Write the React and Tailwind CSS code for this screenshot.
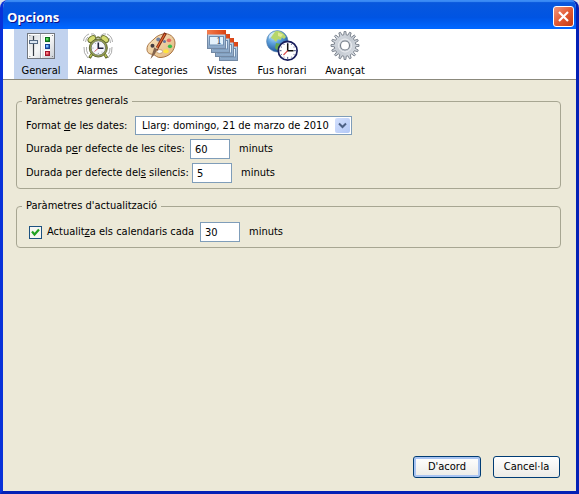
import React from "react";

function GeneralIcon() {
  return (
    <svg width="32" height="32" viewBox="0 0 32 32" aria-hidden="true">
      <defs>
        <linearGradient id="panel" x1="0" y1="0" x2="1" y2="1">
          <stop offset="0" stopColor="#d3d7da" />
          <stop offset="0.5" stopColor="#f7f8f8" />
          <stop offset="1" stopColor="#c9ced4" />
        </linearGradient>
      </defs>
      <rect x="2.5" y="3.5" width="27" height="25" fill="url(#panel)" stroke="#72777f" />
      <path d="M3.5 28V4.5H29" fill="none" stroke="#fff" />
      <path d="M15.5 4V28" stroke="#a5abb3" />
      <path d="M16.5 4V28" stroke="#fff" />
      <path d="M8.5 6V26" stroke="#353b43" strokeWidth="1.2" />
      <rect x="4.5" y="10.5" width="8" height="3" fill="#dce7f3" stroke="#566b85" />
      <rect x="19" y="6" width="6" height="6" fill="#fff" />
      <rect x="19" y="13" width="6" height="6" fill="#fff" />
      <rect x="19" y="20" width="6" height="6" fill="#fff" />
      <rect x="20" y="7" width="5" height="5" fill="#0c6b1b" />
      <rect x="21" y="8" width="2.5" height="2.5" fill="#5fe05f" />
      <rect x="20" y="14" width="5" height="5" fill="#123f96" />
      <rect x="21" y="15" width="2.5" height="2.5" fill="#7cc0ff" />
      <rect x="20" y="21" width="5" height="5" fill="#a3162a" />
      <rect x="21" y="22" width="2.5" height="2.5" fill="#ff7a80" />
      {[5.5, 26.5].map((y) => (
        <React.Fragment key={y}>
          <circle cx="4.8" cy={y} r="0.6" fill="#777" />
          <circle cx="27.5" cy={y} r="0.6" fill="#777" />
        </React.Fragment>
      ))}
    </svg>
  );
}

function AlarmIcon() {
  return (
    <svg width="32" height="32" viewBox="0 0 32 32" aria-hidden="true">
      <g fill="none" stroke="#a2a2a2" strokeWidth="0.9">
        <path d="M1.5 11Q2 6 7 4M3.5 12Q4 8 6 7M30.5 12Q30 6 25 4M28.5 13Q28 9 27 8" />
        <path d="M2 17Q1 23 6 28M4.5 17Q4 21 6 24M30 17Q31 23 26 28M28 18Q28 22 26.5 24" />
        <path d="M9 4Q12 3 14 6M24 4Q21 3 18.5 6" />
      </g>
      <path d="M10 24L7.5 28M22.5 24L25 28" stroke="#596128" strokeWidth="3" />
      <path d="M10 24L8 27M22.5 24L24.5 27" stroke="#bcc65a" strokeWidth="1.5" />
      <path d="M14 8.5Q16 5.5 18.5 8.5" fill="none" stroke="#697038" strokeWidth="1.3" />
      <ellipse cx="9.8" cy="9" rx="4.2" ry="2.8" transform="rotate(-38 9.8 9)" fill="#d6dc71" stroke="#6b7435" />
      <ellipse cx="22.8" cy="9" rx="4.2" ry="2.8" transform="rotate(38 22.8 9)" fill="#d6dc71" stroke="#6b7435" />
      <circle cx="16.3" cy="18" r="9" fill="#98a14a" stroke="#606735" />
      <circle cx="16.3" cy="18" r="7.2" fill="#f6f7fd" stroke="#777f68" />
      <path d="M16.3 12.5V18.2H21.5" fill="none" stroke="#20233d" strokeWidth="1.6" />
      <path d="M16 18.5L12.5 21.5" stroke="#d46068" />
      <g fill="#8b91a0">
        <circle cx="11" cy="18" r="0.6" />
        <circle cx="16.3" cy="23.4" r="0.6" />
        <circle cx="13.5" cy="13.3" r="0.5" />
        <circle cx="20" cy="22" r="0.5" />
      </g>
    </svg>
  );
}

function PaletteIcon() {
  return (
    <svg width="32" height="32" viewBox="0 0 32 32" aria-hidden="true">
      <defs>
        <linearGradient id="wood" x1="0" y1="0" x2="1" y2="1">
          <stop offset="0" stopColor="#fae6c2" />
          <stop offset="1" stopColor="#e0b57c" />
        </linearGradient>
      </defs>
      <path
        d="M18 4C24 2.5 30 7 30 13C30 21 24 27 16 27.5C12 28 10.5 25 8 24.5C5 24 2 23.5 2 19C2 14 6 12 9 9C12 6 14 5 18 4Z"
        fill="url(#wood)" stroke="#a97443"
      />
      <ellipse cx="14.7" cy="21.5" rx="3" ry="1.9" fill="#fff" stroke="#b0855b" strokeWidth="0.7" />
      <circle cx="7.5" cy="15.8" r="2" fill="#443c3f" />
      <circle cx="13.3" cy="9.5" r="2" fill="#7181a1" />
      <ellipse cx="24" cy="10.3" rx="2.2" ry="1.9" fill="#e6695d" />
      <circle cx="19.5" cy="11.5" r="1.5" fill="#6577a0" />
      <ellipse cx="25" cy="16.3" rx="2.1" ry="1.9" fill="#38bd4b" />
      <ellipse cx="21" cy="21.3" rx="2.7" ry="2" fill="#ffe33c" />
      <path d="M20.5 3L11 20" stroke="#7c2812" strokeWidth="3" />
      <path d="M20 4L11 19.5" stroke="#e66b31" strokeWidth="1.2" />
      <path d="M12.5 18.5L9.5 16.8L7.5 23L5.5 29L10 24Z" fill="#83634c" />
      <path d="M9.5 17L12.5 18.8" stroke="#dbc8a9" strokeWidth="1.3" />
    </svg>
  );
}

function ViewsIcon() {
  return (
    <svg width="32" height="32" viewBox="0 0 32 32" aria-hidden="true">
      <defs>
        <linearGradient id="cardTop" x1="0" y1="0" x2="1" y2="0">
          <stop offset="0" stopColor="#f47d4e" />
          <stop offset="1" stopColor="#d94314" />
        </linearGradient>
        <linearGradient id="cardBody" x1="0" y1="0" x2="0" y2="1">
          <stop offset="0" stopColor="#d3e4f3" />
          <stop offset="1" stopColor="#86a3c4" />
        </linearGradient>
      </defs>
      {[3, 2, 1, 0].map((n) => (
        <g key={n} transform={`translate(${n * 4} ${n * 4})`}>
          <rect x="1.5" y="0.5" width="18" height="18" fill="url(#cardBody)" stroke="#7389a4" />
          <rect x="1" y="0" width="19" height="4.5" fill="url(#cardTop)" />
          <rect x="3.5" y="6.5" width="14" height="8.5" fill="#e4f1fb" stroke="#6f8fb2" />
        </g>
      ))}
      <text x="13" y="14" fontSize="9" fontFamily="DejaVu Serif, serif" fill="#263d5e" textAnchor="middle">1</text>
    </svg>
  );
}

function TimezoneIcon() {
  const ticks = [0, 30, 60, 90, 120, 150, 180, 210, 240, 270, 300, 330];
  return (
    <svg width="32" height="32" viewBox="0 0 32 32" aria-hidden="true">
      <defs>
        <radialGradient id="globe" cx="0.35" cy="0.25" r="0.8">
          <stop offset="0" stopColor="#c4e8ff" />
          <stop offset="0.45" stopColor="#5b9fdb" />
          <stop offset="1" stopColor="#174a91" />
        </radialGradient>
      </defs>
      <circle cx="11.3" cy="11.3" r="10.7" fill="url(#globe)" stroke="#5682ad" strokeWidth="0.6" />
      <path d="M9 1.5C13 0 18 3 20 7L18 9L16 7.5L14.500 10L12 9L10 12L7 9L5 8L6 4Z" fill="#b6d66a" />
      <path d="M12 2.5L17 4.5L15 7L12 6Z" fill="#e0e794" />
      <path d="M10 13L15 14L13 18L12 21L9 18Z" fill="#66a84f" />
      <path d="M3 6Q5 2.5 9 2L6 6L3 9Z" fill="#e4f4ff" opacity="0.7" />
      <circle cx="21.7" cy="20.7" r="9.4" fill="#fff" stroke="#171c5b" strokeWidth="1.7" />
      {ticks.map((a) => (
        <path
          key={a}
          d={a % 90 ? "M21.7 13V13.8" : "M21.7 12.5V14.5"}
          stroke="#343b71"
          strokeWidth="0.9"
          transform={`rotate(${a} 21.7 20.7)`}
        />
      ))}
      <path d="M21.700 13.5V20.7H27.5" fill="none" stroke="#111" strokeWidth="1.5" />
      <path d="M21.7 20.7L17.5 25" stroke="#dc4d4d" strokeWidth="1.2" />
    </svg>
  );
}

function gearPath(cx, cy, teeth, outer, inner) {
  const points = [];
  for (let i = 0; i < teeth; i++) {
    [[-0.3, inner], [-0.16, outer], [0.16, outer], [0.3, inner]].forEach(([shift, r]) => {
      const a = ((i + shift) * 2 * Math.PI) / teeth;
      points.push(`${(cx + r * Math.sin(a)).toFixed(2)} ${(cy - r * Math.cos(a)).toFixed(2)}`);
    });
  }
  return `M${points.join("L")}Z`;
}

function GearIcon() {
  return (
    <svg width="32" height="32" viewBox="0 0 32 32" aria-hidden="true">
      <defs>
        <linearGradient id="steel" x1="0" y1="0" x2="1" y2="1">
          <stop offset="0" stopColor="#dfe3e9" />
          <stop offset="0.5" stopColor="#c3c9d1" />
          <stop offset="1" stopColor="#e1e5ea" />
        </linearGradient>
      </defs>
      <path d={gearPath(16, 15.5, 16, 14, 10.7)} fill="url(#steel)" stroke="#737b86" strokeWidth="0.9" />
      <circle cx="16" cy="15.5" r="6.5" fill="none" stroke="#eef0f3" />
      <circle cx="16" cy="15.5" r="4.5" fill="#fff" stroke="#747c87" strokeWidth="1.1" />
    </svg>
  );
}

const tabs = [
  { label: "General", Icon: GeneralIcon, width: "w-[54px]", active: true },
  { label: "Alarmes", Icon: AlarmIcon, width: "w-[59px]" },
  { label: "Categories", Icon: PaletteIcon, width: "w-[68px]" },
  { label: "Vistes", Icon: ViewsIcon, width: "w-[54px]" },
  { label: "Fus horari", Icon: TimezoneIcon, width: "w-[66px]" },
  { label: "Avançat", Icon: GearIcon, width: "w-[60px]" },
];

function MinutesInput({ id, value }) {
  return (
    <input
      id={id}
      type="text"
      defaultValue={value}
      className="h-5 w-10 shrink-0 border border-[#7f9db9] bg-white px-1"
    />
  );
}

function Group({ title, children }) {
  return (
    <fieldset className="min-w-0 rounded border border-[#a7a692] pr-2 pb-[5px] pl-[9px]">
      <legend className="-ml-1 h-[14px] px-1 leading-[14px]">{title}</legend>
      {children}
    </fieldset>
  );
}

export default function App() {
  return (
    <div className="bg-[#dfe3ea]">
      <div className="flex min-h-screen flex-col overflow-hidden rounded-t-lg border-x-[3px] border-b-[3px] border-[#0831d9] border-r-[#0420b5] border-b-[#0420b5] bg-[#ece9d8] font-['DejaVu_Sans_Condensed','DejaVu_Sans',sans-serif] text-[11px] leading-[14px] text-black">
        <header className="-mx-[3px] flex h-[29px] shrink-0 items-center justify-between bg-linear-to-b from-[#0a58dc] from-0% via-[#0054e3] via-60% to-[#0066ff] to-95% pt-1 pr-[5px] pl-[7px] shadow-[inset_0_2px_1px_#3c8cf5]">
          <h1 className="font-['Open_Sans',sans-serif] text-[13px] font-bold text-white [text-shadow:1px_1px_#0f1089]">
            Opcions
          </h1>
          <button
            type="button"
            aria-label="Tanca"
            className="flex size-[21px] items-center justify-center rounded-[3px] border border-white bg-linear-to-br from-[#f0957a] via-[#e35a32] to-[#c33b12]"
          >
            <svg width="13" height="13" viewBox="0 0 13 13" aria-hidden="true">
              <path d="M2 2L11 11M11 2L2 11" stroke="#fff" strokeWidth="2.2" />
            </svg>
          </button>
        </header>

        <nav className="flex h-[51px] shrink-0 border-b border-[#8b897c] bg-white pl-[11px]">
          {tabs.map(({ label, Icon, width, active }) => (
            <button
              key={label}
              type="button"
              className={`flex shrink-0 flex-col items-center pt-px whitespace-nowrap ${width} ${active ? "bg-[#c1d2ee]" : ""}`}
            >
              <Icon />
              <span className="pt-[2px]">{label}</span>
            </button>
          ))}
        </nav>

        <main className="flex grow flex-col gap-[10px] pt-[14px] pr-[15px] pl-[13px]">
          <Group title="Paràmetres generals">
            <div className="flex flex-col gap-1 pt-2">
              <div className="flex items-center">
                <label htmlFor="date-format" className="w-[109px] shrink-0 whitespace-nowrap">
                  Format <u>d</u>e les dates:
                </label>
                <div className="relative w-[217px]">
                  <select
                    id="date-format"
                    className="block h-[19px] w-full appearance-none border border-[#7f9db9] bg-white pl-[6px]"
                  >
                    <option>Llarg: domingo, 21 de marzo de 2010</option>
                  </select>
                  <span className="pointer-events-none absolute top-[2px] right-[2px] flex h-[15px] w-[15px] items-center justify-center rounded-xs bg-linear-to-br from-[#d3e0fd] to-[#b3c8f6]">
                    <svg width="9" height="7" viewBox="0 0 9 7" aria-hidden="true">
                      <path d="M1 1.5L4.5 5L8 1.5" fill="none" stroke="#4d6185" strokeWidth="2" />
                    </svg>
                  </span>
                </div>
              </div>
              <div className="flex items-center">
                <label htmlFor="event-length" className="w-[164px] shrink-0 whitespace-nowrap">
                  Durada p<u>e</u>r defecte de les cites:
                </label>
                <MinutesInput id="event-length" value="60" />
                <span className="pl-[9px]">minuts</span>
              </div>
              <div className="flex items-center">
                <label htmlFor="snooze-length" className="w-[166px] shrink-0 whitespace-nowrap">
                  Durada per defecte del<u>s</u> silencis:
                </label>
                <MinutesInput id="snooze-length" value="5" />
                <span className="pl-[9px]">minuts</span>
              </div>
            </div>
          </Group>

          <Group title="Paràmetres d'actualització">
            <div className="flex items-center pt-[9px] pl-[3px]">
              <input
                id="refresh"
                type="checkbox"
                defaultChecked
                className="peer size-[13px] shrink-0 appearance-none border border-[#1c5180] bg-[#f6f6f2]"
              />
              <svg width="13" height="13" viewBox="0 0 13 13" className="pointer-events-none -ml-[13px] hidden shrink-0 peer-checked:block" aria-hidden="true">
                <path d="M3 5.5L5.5 8.5L10 3.5" fill="none" stroke="#21a121" strokeWidth="2.2" />
              </svg>
              <label htmlFor="refresh" className="w-[158px] shrink-0 pl-[5px] whitespace-nowrap">
                Actualit<u>z</u>a els calendaris cada
              </label>
              <MinutesInput id="refresh-minutes" value="30" />
              <label htmlFor="refresh-minutes" className="pl-[9px]">minuts</label>
            </div>
          </Group>
        </main>

        <footer className="flex shrink-0 justify-end gap-3 pr-4 pb-[13px]">
          <button
            type="submit"
            className="h-[22px] w-[68px] rounded-[3px] border border-[#003c74] bg-linear-to-b from-white to-[#ecebe6] shadow-[inset_0_0_0_2px_#a9c4f2]"
          >
            D'acord
          </button>
          <button
            type="button"
            className="h-[22px] w-[67px] rounded-[3px] border border-[#003c74] bg-linear-to-b from-white to-[#ecebe6]"
          >
            Cancel·la
          </button>
        </footer>
      </div>
    </div>
  );
}
